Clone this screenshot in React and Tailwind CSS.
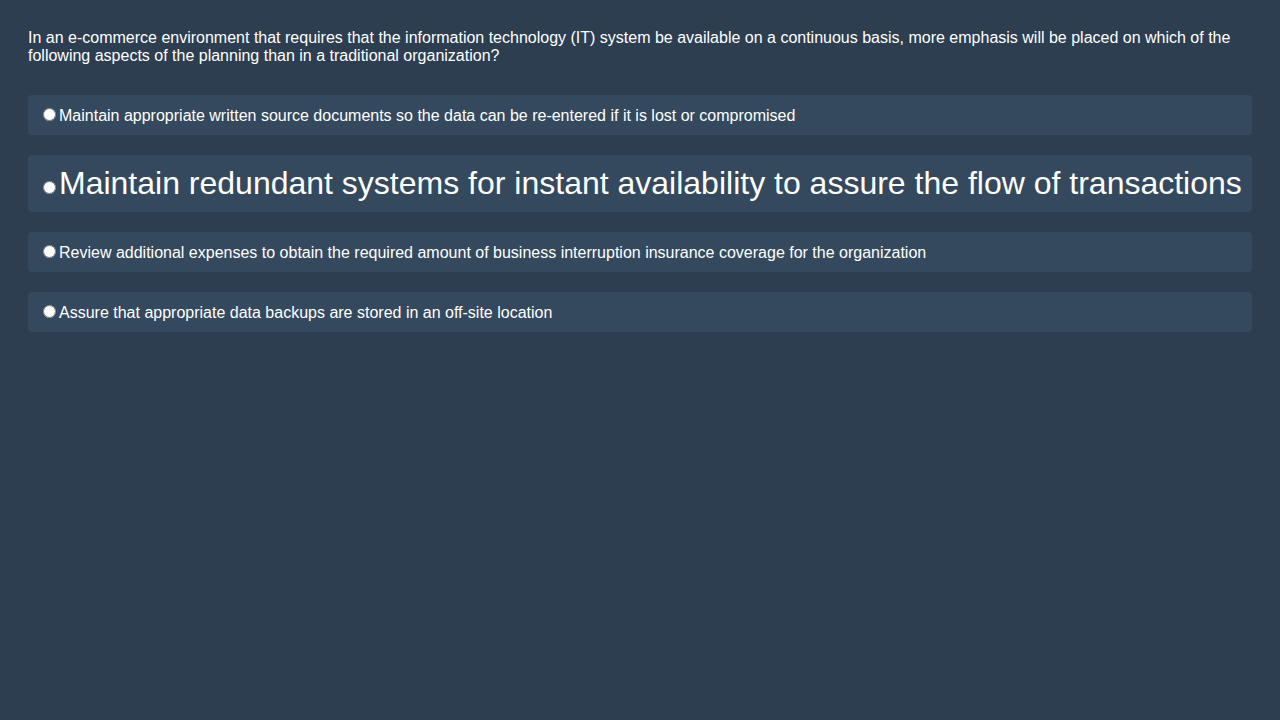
const options = [
  { text: 'Maintain appropriate written source documents so the data can be re-entered if it is lost or compromised' },
  { text: 'Maintain redundant systems for instant availability to assure the flow of transactions', big: true },
  { text: 'Review additional expenses to obtain the required amount of business interruption insurance coverage for the organization' },
  { text: 'Assure that appropriate data backups are stored in an off-site location' },
]

export default function App() {
  return (
    <div className="min-h-[720px] bg-[#2c3e50] px-[28px] pt-[29px] pb-[28px] text-white font-['Liberation_Sans',Arial,sans-serif]">
      <p className="text-[16px] leading-[18px] mb-[30px]">
        In an e-commerce environment that requires that the information technology (IT) system be available on a continuous basis, more emphasis will be placed on which of the following aspects of the planning than in a traditional organization?
      </p>
      <div className="flex flex-col gap-[20px]">
        {options.map((o, i) => (
          <label
            key={i}
            className={`block rounded-[4px] bg-[#34495e] px-[10px] ${
              o.big ? 'py-[10px] text-[32px] leading-[37px]' : 'pt-[11px] pb-[9px] text-[16px] leading-[20px]'
            }`}
          >
            <input type="radio" name="q" className="m-0 ml-[5px] mr-[3px] align-baseline" />
            {o.text}
          </label>
        ))}
      </div>
    </div>
  )
}
